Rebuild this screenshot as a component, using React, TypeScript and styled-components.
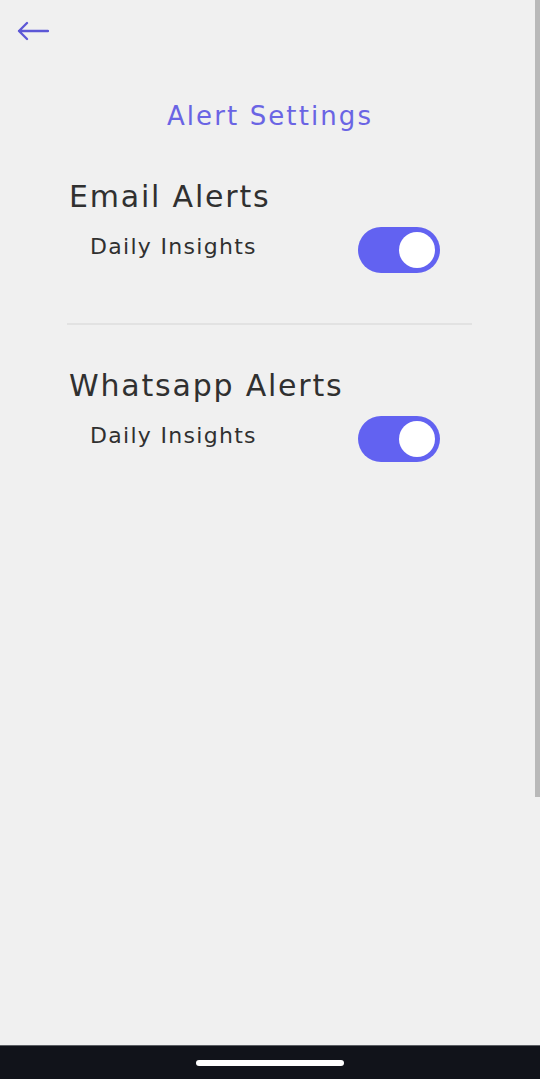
import React from "react";
import styled, { createGlobalStyle } from "styled-components";

const GlobalStyle = createGlobalStyle`
  html, body {
    margin: 0;
    padding: 0;
    background: #f0f0f0;
  }
  * { box-sizing: border-box; }
`;

const Screen = styled.div`
  position: relative;
  width: 540px;
  height: 1079px;
  display: flex;
  flex-direction: column;
  background: #f0f0f0;
  font-family: "DejaVu Sans", Inter, sans-serif;
  overflow: hidden;
`;

const Main = styled.main`
  flex: 1;
  display: flex;
  flex-direction: column;
  padding-top: 21px;
`;

const BackButton = styled.button`
  align-self: flex-start;
  margin-left: 17px;
  padding: 0;
  border: 0;
  background: transparent;
  display: flex;
  height: 20px;
  cursor: pointer;
`;

const Title = styled.h1`
  margin: 60px 0 0;
  text-align: center;
  font-size: 26px;
  line-height: 30px;
  font-weight: 400;
  color: #6a64e4;
  letter-spacing: 2.1px;
`;

const Section = styled.section<{ $first?: boolean }>`
  margin: ${(p) => (p.$first ? "48px" : "43px")} 68px 0 67px;
  display: flex;
  flex-direction: column;
`;

const Heading = styled.h2`
  margin: 0;
  padding-left: 2px;
  font-size: 30px;
  line-height: 36px;
  font-weight: 400;
  color: #303030;
  letter-spacing: 1.8px;
`;

const Row = styled.div`
  margin-top: 12px;
  display: flex;
  align-items: center;
  justify-content: space-between;
  padding: 0 32px 0 23px;
`;

const Label = styled.span`
  font-size: 22px;
  line-height: 26px;
  color: #303030;
  padding-bottom: 6px;
  letter-spacing: 1.3px;
`;

const Track = styled.button<{ $on: boolean }>`
  width: 82px;
  height: 46px;
  border-radius: 23px;
  border: 0;
  padding: 0 5px;
  display: flex;
  align-items: center;
  justify-content: ${(p) => (p.$on ? "flex-end" : "flex-start")};
  background: ${(p) => (p.$on ? "#6262f1" : "#c4c4c4")};
  cursor: pointer;
`;

const Knob = styled.span`
  width: 36px;
  height: 36px;
  border-radius: 50%;
  background: #ffffff;
`;

const Divider = styled.hr`
  margin: 50px 0 0;
  border: 0;
  height: 2px;
  background: #e2e2e2;
`;

const ScrollThumb = styled.div`
  position: absolute;
  top: 0;
  right: 0;
  width: 5px;
  height: 797px;
  background: #b9b9b9;
`;

const NavBar = styled.div`
  height: 34px;
  flex-shrink: 0;
  background: #11131a;
  border-top: 1px solid #5b5e63;
  display: flex;
  justify-content: center;
  padding-top: 14px;
`;

const Handle = styled.div`
  width: 148px;
  height: 6px;
  border-radius: 3px;
  background: #ffffff;
`;

const Toggle: React.FC<{ on: boolean }> = ({ on }) => (
  <Track $on={on} aria-pressed={on}>
    <Knob />
  </Track>
);

const ArrowLeft = () => (
  <svg width="32" height="20" viewBox="0 0 32 20" fill="none">
    <path
      d="M31 10H2M10 2L2 10L10 18"
      stroke="#5c57d6"
      strokeWidth="2.3"
      strokeLinecap="round"
      strokeLinejoin="round"
    />
  </svg>
);

export default function App() {
  return (
    <>
      <GlobalStyle />
      <Screen>
        <Main>
          <BackButton aria-label="Back">
            <ArrowLeft />
          </BackButton>
          <Title>Alert Settings</Title>
          <Section $first>
            <Heading>Email Alerts</Heading>
            <Row>
              <Label>Daily Insights</Label>
              <Toggle on />
            </Row>
            <Divider />
          </Section>
          <Section>
            <Heading>Whatsapp Alerts</Heading>
            <Row>
              <Label>Daily Insights</Label>
              <Toggle on />
            </Row>
          </Section>
        </Main>
        <NavBar>
          <Handle />
        </NavBar>
        <ScrollThumb />
      </Screen>
    </>
  );
}
